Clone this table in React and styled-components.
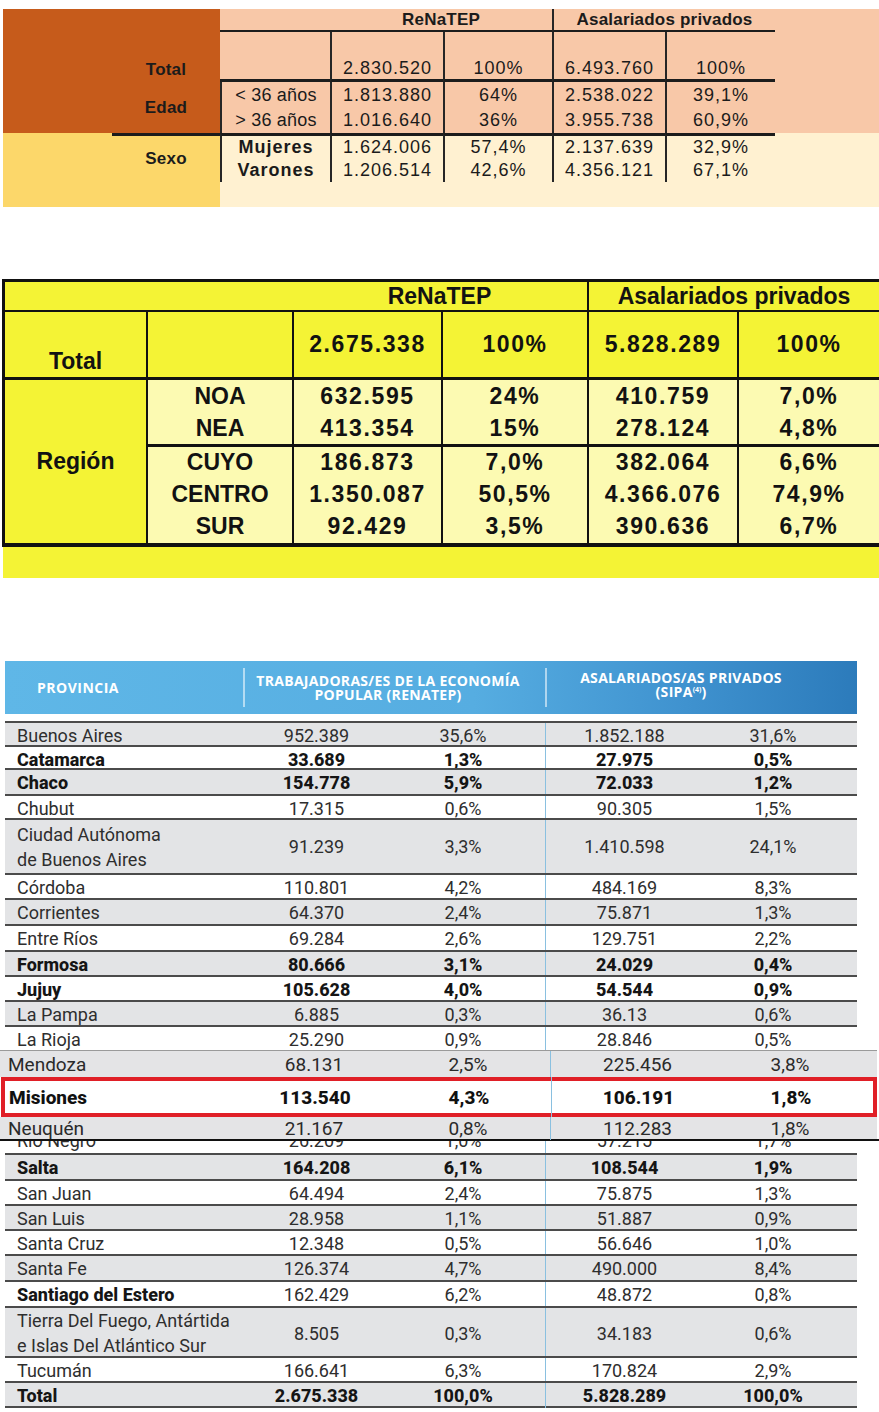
import React from "react";
import styled, { createGlobalStyle } from "styled-components";

const GlobalStyle = createGlobalStyle`
  html, body { margin: 0; padding: 0; background: #fff; }
  body { width: 879px; overflow-x: hidden; font-family: "Liberation Sans", Arial, sans-serif; }
  * { box-sizing: border-box; }
`;

const ORANGE = "#C65B1B";
const SAND = "#FCD76A";
const PEACH = "#F8C8A8";
const CREAM = "#FFF1D1";
const LEMON = "#F4F335";
const PALE = "#FCFAB2";

const Page = styled.div`
  width: 879px;
  padding-top: 9px;
  display: flex;
  flex-direction: column;
`;

/* ---------- table 1: edad / sexo ---------- */

const AgeGrid = styled.div`
  display: grid;
  grid-template-columns: 109px 108px 110px 113px 109px 113px 110px 1fr;
  grid-template-rows: 23px 50px 26px 25px 25px 24px 25px;
  margin-left: 3px;
  width: 876px;
`;

const AgeCell = styled.div`
  grid-column: ${(p) => p.$col} / span ${(p) => p.$span || 1};
  grid-row: ${(p) => p.$row} / span ${(p) => p.$rows || 1};
  background: ${(p) => p.$bg};
  border-left: ${(p) => (p.$bl ? "2px solid #262626" : "0")};
  border-top: ${(p) => (p.$bt ? `${p.$bt}px solid #1c1c1c` : "0")};
  border-bottom: ${(p) => (p.$bb ? `${p.$bb}px solid #1c1c1c` : "0")};
  display: flex;
  align-items: ${(p) => (p.$bottom ? "flex-end" : "center")};
  justify-content: center;
  font-size: 18px;
  letter-spacing: 1px;
  color: #1b1b1b;
  white-space: nowrap;
`;

const AgeLabel = styled(AgeCell)`
  font-weight: 700;
  font-size: 17px;
  letter-spacing: 0.2px;
  padding-bottom: ${(p) => (p.$bottom ? "2px" : "0")};
`;

const AgeSub = styled(AgeCell)`
  font-weight: ${(p) => (p.$strong ? 700 : 400)};
  letter-spacing: ${(p) => (p.$strong ? "1px" : "0.2px")};
`;

const ageRows = [
  ["< 36 años", "1.813.880", "64%", "2.538.022", "39,1%"],
  ["> 36 años", "1.016.640", "36%", "3.955.738", "60,9%"],
];
const sexRows = [
  ["Mujeres", "1.624.006", "57,4%", "2.137.639", "32,9%"],
  ["Varones", "1.206.514", "42,6%", "4.356.121", "67,1%"],
];

const AgeTable = () => (
  <AgeGrid>
    <AgeCell $col={1} $row={1} $rows={4} $bg={ORANGE} />
    <AgeCell $col={2} $row={1} $bg={ORANGE} />
    <AgeCell $col={3} $row={1} $bg={PEACH} $bb={2} />
    <AgeLabel $col={4} $span={2} $row={1} $bg={PEACH} $bb={2}>ReNaTEP</AgeLabel>
    <AgeLabel $col={6} $span={2} $row={1} $bg={PEACH} $bb={2} $bl>
      Asalariados privados
    </AgeLabel>
    <AgeCell $col={8} $row={1} $rows={4} $bg={PEACH} />

    <AgeLabel $col={2} $row={2} $bg={ORANGE} $bottom>Total</AgeLabel>
    <AgeCell $col={3} $row={2} $bg={PEACH} $bb={3} />
    {["2.830.520", "100%", "6.493.760", "100%"].map((v, i) => (
      <AgeCell key={v + i} $col={4 + i} $row={2} $bg={PEACH} $bb={3} $bl $bottom>
        {v}
      </AgeCell>
    ))}

    <AgeLabel $col={2} $row={3} $rows={2} $bg={ORANGE}>Edad</AgeLabel>
    {ageRows.map((r, ri) =>
      r.map((v, i) =>
        i === 0 ? (
          <AgeSub key={v} $col={3} $row={3 + ri} $bg={PEACH} $bl>{v}</AgeSub>
        ) : (
          <AgeCell key={v + i} $col={3 + i} $row={3 + ri} $bg={PEACH} $bl>{v}</AgeCell>
        )
      )
    )}

    <AgeCell $col={1} $row={5} $rows={3} $bg={SAND} />
    <AgeLabel $col={2} $row={5} $rows={2} $bg={SAND} $bt={3}>Sexo</AgeLabel>
    {sexRows.map((r, ri) =>
      r.map((v, i) =>
        i === 0 ? (
          <AgeSub key={v} $col={3} $row={5 + ri} $bg={CREAM} $bl $bt={ri === 0 ? 3 : 0} $strong>
            {v}
          </AgeSub>
        ) : (
          <AgeCell key={v + i} $col={3 + i} $row={5 + ri} $bg={CREAM} $bl $bt={ri === 0 ? 3 : 0}>
            {v}
          </AgeCell>
        )
      )
    )}
    <AgeCell $col={8} $row={5} $rows={3} $bg={CREAM} />
    <AgeCell $col={2} $row={7} $bg={SAND} />
    <AgeCell $col={3} $span={5} $row={7} $bg={CREAM} />
  </AgeGrid>
);

/* ---------- table 2: region ---------- */

const RegionGrid = styled.div`
  margin: 72px 0 0 2px;
  width: 877px;
  display: grid;
  grid-template-columns: 141px 146px 149px 146px 150px 1fr;
  grid-template-rows: 30px 68px 32px 35px 31px 32px 33px;
  border-top: 3px solid #111;
  border-left: 3px solid #111;
  border-bottom: 4px solid #111;
  background: ${LEMON};
`;

const RegionCell = styled.div`
  grid-column: ${(p) => p.$col} / span ${(p) => p.$span || 1};
  grid-row: ${(p) => p.$row} / span ${(p) => p.$rows || 1};
  background: ${(p) => (p.$pale ? PALE : LEMON)};
  border-left: ${(p) => (p.$bl ? "2px solid #111" : "0")};
  border-bottom: ${(p) => (p.$bb ? `${p.$bb}px solid #111` : "0")};
  display: flex;
  align-items: ${(p) => (p.$bottom ? "flex-end" : "center")};
  justify-content: center;
  padding-bottom: ${(p) => (p.$bottom ? "2px" : "0")};
  font-size: 23px;
  font-weight: 700;
  color: #121212;
  white-space: nowrap;
`;

const RegionNum = styled(RegionCell)`
  letter-spacing: 1.6px;
`;

const regions = [
  ["NOA", "632.595", "24%", "410.759", "7,0%"],
  ["NEA", "413.354", "15%", "278.124", "4,8%"],
  ["CUYO", "186.873", "7,0%", "382.064", "6,6%"],
  ["CENTRO", "1.350.087", "50,5%", "4.366.076", "74,9%"],
  ["SUR", "92.429", "3,5%", "390.636", "6,7%"],
];

const RegionBand = styled.div`
  margin-left: 3px;
  width: 876px;
  height: 31px;
  background: ${LEMON};
`;

const RegionTable = () => (
  <>
    <RegionGrid>
      <RegionCell $col={1} $span={2} $row={1} $bb={2} />
      <RegionCell $col={3} $span={2} $row={1} $bb={2}>ReNaTEP</RegionCell>
      <RegionCell $col={5} $span={2} $row={1} $bb={2} $bl>Asalariados privados</RegionCell>

      <RegionCell $col={1} $row={2} $bb={3} $bottom>Total</RegionCell>
      <RegionCell $col={2} $row={2} $bb={3} $bl />
      {["2.675.338", "100%", "5.828.289", "100%"].map((v, i) => (
        <RegionNum key={v + i} $col={3 + i} $row={2} $bb={3} $bl>{v}</RegionNum>
      ))}

      <RegionCell $col={1} $row={3} $rows={5}>Región</RegionCell>
      {regions.map((r, ri) =>
        r.map((v, i) =>
          i === 0 ? (
            <RegionCell key={v} $col={2} $row={3 + ri} $pale $bl $bb={ri === 1 ? 3 : 0}>{v}</RegionCell>
          ) : (
            <RegionNum key={v + i} $col={2 + i} $row={3 + ri} $pale $bl $bb={ri === 1 ? 3 : 0}>
              {v}
            </RegionNum>
          )
        )
      )}
    </RegionGrid>
    <RegionBand />
  </>
);

/* ---------- table 3: provincias ---------- */

const ProvHead = styled.div`
  margin: 83px 0 7px 5px;
  width: 852px;
  height: 53px;
  display: grid;
  grid-template-columns: 238px 302px 1fr;
  align-items: center;
  background: linear-gradient(90deg, #5fb7e7 0%, #56ade1 55%, #3f92cf 80%, #2c7bbb 100%);
  color: #fff;
  font-family: "Open Sans", "Liberation Sans", sans-serif;
  font-weight: 700;
  font-size: 14px;
  line-height: 14px;
  letter-spacing: 0.3px;
`;

const HeadCell = styled.div`
  height: 39px;
  display: flex;
  align-items: center;
  justify-content: ${(p) => (p.$left ? "flex-start" : "center")};
  text-align: center;
  padding-left: ${(p) => p.$pl || 0}px;
  padding-right: ${(p) => p.$pr || 0}px;
  border-left: ${(p) => (p.$sep ? "2px solid rgba(255,255,255,0.55)" : "0")};
  letter-spacing: ${(p) => (p.$left ? "0.5px" : "0.3px")};
`;

const HeadLines = styled.span`
  margin-top: ${(p) => p.$lift || 0}px;
`;

const Sup = styled.sup`
  font-size: 7px;
  line-height: 0;
  vertical-align: 5px;
  letter-spacing: 0;
`;

const ProvBody = styled.div`
  margin-left: 5px;
  width: 852px;
  display: flex;
  flex-direction: column;
  font-family: Roboto, "Liberation Sans", sans-serif;
  font-size: 18px;
  color: #2e2e2e;
`;

const ProvRow = styled.div`
  display: grid;
  grid-template-columns: 238px 147px 155px 158px 140px 1fr;
  height: ${(p) => p.$h}px;
  border-top: 2px solid #4b4b4b;
  border-bottom: ${(p) => (p.$last ? "2px solid #4b4b4b" : "0")};
  background: ${(p) => (p.$shade ? "#E3E4E6" : "#fff")};
  font-weight: ${(p) => (p.$bold ? 800 : 400)};
  color: ${(p) => (p.$bold ? "#151515" : "#2e2e2e")};
`;

const NameCell = styled.div`
  display: flex;
  align-items: center;
  padding-left: 12px;
  line-height: 25px;
  font-weight: ${(p) => (p.$bold ? 800 : "inherit")};
  color: ${(p) => (p.$bold ? "#151515" : "inherit")};
`;

const ValCell = styled.div`
  display: flex;
  align-items: center;
  justify-content: center;
  padding-right: ${(p) => p.$pr || 0}px;
  border-left: ${(p) => (p.$sep ? "1.5px solid #8ac0e0" : "0")};
`;

const PatchBlock = styled.div`
  width: 879px;
  border-bottom: 2px solid #111;
  font-family: Roboto, "Liberation Sans", sans-serif;
  font-size: 19px;
  color: #2a2a2a;
  display: flex;
  flex-direction: column;
`;

const PatchRow = styled.div`
  width: 877px;
  height: ${(p) => p.$h}px;
  display: grid;
  grid-template-columns: 240px 148px 162px 174px 132px 1fr;
  background: ${(p) => (p.$shade ? "#E4E4E6" : "#fff")};
  border-top: ${(p) => (p.$top ? "1px solid #9a9a9a" : "0")};
  font-weight: ${(p) => (p.$bold ? 800 : 400)};
  color: ${(p) => (p.$bold ? "#111" : "#2a2a2a")};
`;

const HighlightRow = styled(PatchRow)`
  margin-left: 1px;
  width: 876px;
  box-shadow: inset 0 0 0 4px #e01f27;
`;

const PatchName = styled.div`
  display: flex;
  align-items: center;
  padding-left: 8px;
`;

const CutRow = styled.div`
  height: 12px;
  overflow: hidden;
  display: grid;
  grid-template-columns: 238px 147px 155px 158px 140px 1fr;
  grid-template-rows: 12px;
  align-items: end;
  background: #fff;
  margin-left: 5px;
  width: 852px;
  font-family: Roboto, "Liberation Sans", sans-serif;
  font-size: 18px;
  line-height: 24px;
  color: #2e2e2e;
`;

const CutText = styled.div`
  height: 24px;
  align-self: end;
  text-align: ${(p) => (p.$left ? "left" : "center")};
  padding-left: ${(p) => (p.$left ? 12 : 0)}px;
  padding-right: ${(p) => p.$pr || 0}px;
  border-left: ${(p) => (p.$sep ? "1.5px solid #8ac0e0" : "0")};
  white-space: nowrap;
`;

const upper = [
  { name: "Buenos Aires", v: ["952.389", "35,6%", "1.852.188", "31,6%"], h: 24 },
  { name: "Catamarca", v: ["33.689", "1,3%", "27.975", "0,5%"], h: 23, bold: true },
  { name: "Chaco", v: ["154.778", "5,9%", "72.033", "1,2%"], h: 26, bold: true },
  { name: "Chubut", v: ["17.315", "0,6%", "90.305", "1,5%"], h: 24 },
  { name: ["Ciudad Autónoma", "de Buenos Aires"], v: ["91.239", "3,3%", "1.410.598", "24,1%"], h: 55 },
  { name: "Córdoba", v: ["110.801", "4,2%", "484.169", "8,3%"], h: 25 },
  { name: "Corrientes", v: ["64.370", "2,4%", "75.871", "1,3%"], h: 26 },
  { name: "Entre Ríos", v: ["69.284", "2,6%", "129.751", "2,2%"], h: 26 },
  { name: "Formosa", v: ["80.666", "3,1%", "24.029", "0,4%"], h: 25, bold: true },
  { name: "Jujuy", v: ["105.628", "4,0%", "54.544", "0,9%"], h: 25, bold: true },
  { name: "La Pampa", v: ["6.885", "0,3%", "36.13", "0,6%"], h: 25 },
  { name: "La Rioja", v: ["25.290", "0,9%", "28.846", "0,5%"], h: 25 },
];

const lower = [
  { name: "Salta", v: ["164.208", "6,1%", "108.544", "1,9%"], h: 26, bold: true },
  { name: "San Juan", v: ["64.494", "2,4%", "75.875", "1,3%"], h: 25 },
  { name: "San Luis", v: ["28.958", "1,1%", "51.887", "0,9%"], h: 25 },
  { name: "Santa Cruz", v: ["12.348", "0,5%", "56.646", "1,0%"], h: 25 },
  { name: "Santa Fe", v: ["126.374", "4,7%", "490.000", "8,4%"], h: 26 },
  { name: "Santiago del Estero", v: ["162.429", "6,2%", "48.872", "0,8%"], h: 26, nameBold: true },
  {
    name: ["Tierra Del Fuego, Antártida", "e Islas Del Atlántico Sur"],
    v: ["8.505", "0,3%", "34.183", "0,6%"],
    h: 50,
  },
  { name: "Tucumán", v: ["166.641", "6,3%", "170.824", "2,9%"], h: 25 },
  { name: "Total", v: ["2.675.338", "100,0%", "5.828.289", "100,0%"], h: 27, bold: true, last: true },
];

const patch = [
  { name: "Mendoza", v: ["68.131", "2,5%", "225.456", "3,8%"] },
  { name: "Misiones", v: ["113.540", "4,3%", "106.191", "1,8%"] },
  { name: "Neuquén", v: ["21.167", "0,8%", "112.283", "1,8%"] },
];

const Values = ({ v, gap }) =>
  v.map((x, i) => (
    <ValCell key={i} $pr={i === 1 ? gap : 0} $sep={i === 2}>
      {x}
    </ValCell>
  ));

const ProvRows = ({ rows }) =>
  rows.map((r, i) => (
    <ProvRow key={i} $h={r.h} $shade={i % 2 === 0} $bold={r.bold} $last={r.last}>
      <NameCell $bold={r.nameBold}>
        {Array.isArray(r.name) ? (
          <span>
            {r.name[0]}
            <br />
            {r.name[1]}
          </span>
        ) : (
          r.name
        )}
      </NameCell>
      <Values v={r.v} gap={9} />
      <div />
    </ProvRow>
  ));

const PatchCells = ({ r }) => (
  <>
    <PatchName>{r.name}</PatchName>
    <Values v={r.v} gap={2} />
    <div />
  </>
);

const ProvinceTable = () => (
  <>
    <ProvHead>
      <HeadCell $left $pl={32}>PROVINCIA</HeadCell>
      <HeadCell $sep $pr={14}>
        <HeadLines>
          TRABAJADORAS/ES DE LA ECONOMÍA
          <br />
          POPULAR (RENATEP)
        </HeadLines>
      </HeadCell>
      <HeadCell $sep $pr={42}>
        <HeadLines $lift={-6}>
          ASALARIADOS/AS PRIVADOS
          <br />
          (SIPA<Sup>(4)</Sup>)
        </HeadLines>
      </HeadCell>
    </ProvHead>
    <ProvBody>
      <ProvRows rows={upper} />
    </ProvBody>
    <PatchBlock>
      <PatchRow $h={27} $shade $top>
        <PatchCells r={patch[0]} />
      </PatchRow>
      <HighlightRow $h={40} $bold>
        <PatchCells r={patch[1]} />
      </HighlightRow>
      <PatchRow $h={22} $shade>
        <PatchCells r={patch[2]} />
      </PatchRow>
    </PatchBlock>
    <CutRow>
      <CutText $left>Río Negro</CutText>
      <CutText>26.209</CutText>
      <CutText $pr={9}>1,0%</CutText>
      <CutText $sep>57.215</CutText>
      <CutText>1,7%</CutText>
    </CutRow>
    <ProvBody>
      <ProvRows rows={lower} />
    </ProvBody>
  </>
);

export default function App() {
  return (
    <>
      <GlobalStyle />
      <Page>
        <AgeTable />
        <RegionTable />
        <ProvinceTable />
      </Page>
    </>
  );
}
